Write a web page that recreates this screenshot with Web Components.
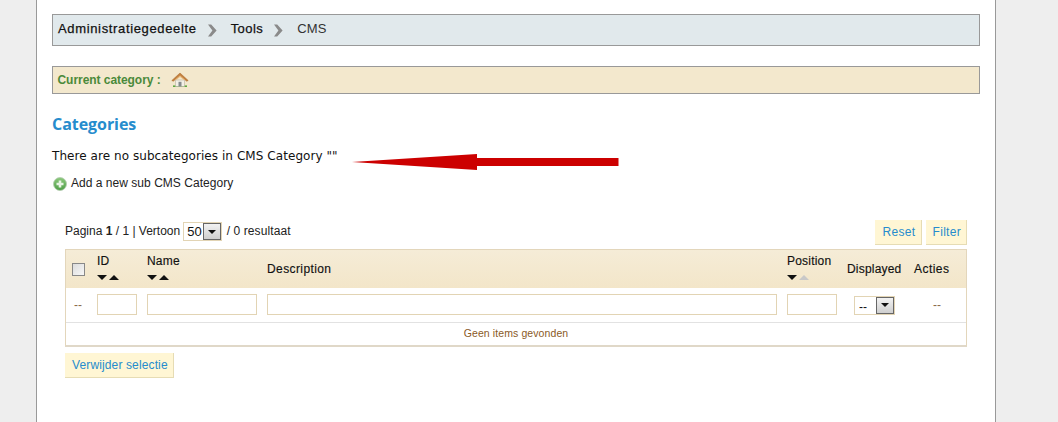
<!DOCTYPE html>
<html>
<head>
<meta charset="utf-8">
<title>CMS</title>
<style>
  html, body { margin: 0; padding: 0; height: 422px; overflow: hidden; background: #eee; }
</style>
</head>
<body>
<admin-page>
  <crumb-bar></crumb-bar>
  <category-bar></category-bar>
  <category-notice></category-notice>
  <list-toolbar></list-toolbar>
  <cms-table></cms-table>
  <yellow-button style="margin:6px 0 0 13px;letter-spacing:.13px">Verwijder selectie</yellow-button>
</admin-page>

<script>
// small helper, every element is just a shadow root + innerHTML
class BaseEl extends HTMLElement {
  constructor() {
    super();
    this.attachShadow({ mode: 'open' });
  }
  connectedCallback() {
    this.shadowRoot.innerHTML = this.render();
  }
}

class AdminPage extends BaseEl {
  render() {
    return `
      <style>
        :host {
          display: block;
          box-sizing: border-box;
          width: 960px;
          height: 422px;
          margin-left: 36px;
          background: #fff;
          border-left: 1px solid #999;
          border-right: 1px solid #999;
          padding: 14px 15px 0;
          font-family: "Liberation Sans", Arial, sans-serif;
          font-size: 12px;
          color: #222;
        }
      </style>
      <slot></slot>`;
  }
}

class CrumbBar extends BaseEl {
  render() {
    const arrow = `<svg width="9" height="13" viewBox="0 0 9 13"><path d="M0 .5h3.200L8.600 6.500 3.200 12.500H0L4.400 6.500z" fill="#8a8a8a"/></svg>`;
    return `
      <style>
        :host {
          display: flex;
          align-items: center;
          box-sizing: border-box;
          width: 928px;
          height: 32px;
          padding: 0 5px 4px;
          background: #e1e9ec;
          border: 1px solid #999;
          font-size: 13px;
          letter-spacing: .15px;
          color: #111;
        }
        b { font-weight: normal; letter-spacing: .65px; -webkit-text-stroke: .25px #111; }
        b.short { letter-spacing: .45px; }
        svg { margin: 4px 14px 0 11px; }
        svg.last { margin-right: 14px; }
        span { color: #333; }
      </style>
      <b>Administratiegedeelte</b>${arrow}<b class="short">Tools</b>${arrow}<span>CMS</span>`;
  }
}

class CategoryBar extends BaseEl {
  render() {
    return `
      <style>
        :host {
          display: flex;
          align-items: center;
          box-sizing: border-box;
          width: 928px;
          height: 28px;
          margin-top: 20px;
          padding: 0 4.500px;
          background: #f3e8cd;
          border: 1px solid #999;
          color: #4a8a3a;
          font-weight: bold;
          font-size: 12px;
          letter-spacing: -.05px;
        }
        svg { margin-left: 10px; }
      </style>
      Current category :
      <svg width="18" height="16" viewBox="0 0 18 16">
        <path d="M2 15h14v-1.600H2z" fill="#5da83f"/>
        <path d="M4.500 14.500V8h9v6.500z" fill="#f2efe6" stroke="#b9b2a0" stroke-width=".6"/>
        <path d="M7.500 14.500V9.800h3v4.700z" fill="#868a8c"/>
        <path d="M.8 8.500 9 1l8.200 7.500-1.500.7L9 3.600 2.300 9.200z" fill="#c4803c" stroke="#a5652a" stroke-width=".5"/>
        <path d="M9 3.600l-5 4.200 1 .3L9 5l4 3.100 1-.3z" fill="#e9b878"/>
      </svg>`;
  }
}

class CategoryNotice extends BaseEl {
  render() {
    return `
      <style>
        :host { display: block; position: relative; }
        h3 {
          margin: 20px 0 0;
          height: 20px;
          font: bold 16px/20px "Open Sans", Verdana, sans-serif;
          letter-spacing: -.05px;
          color: #268ccd;
        }
        p {
          margin: 14px 0 0;
          height: 16px;
          line-height: 16px;
          font-family: "DejaVu Sans", Verdana, sans-serif;
          font-size: 12px;
          letter-spacing: .06px;
          color: #111;
        }
        .add {
          display: flex;
          align-items: center;
          margin-top: 11px;
          height: 16px;
          font-size: 12px;
          letter-spacing: .03px;
          color: #222;
        }
        .add svg { margin: 2px 4px 0 1px; }
        .arrow { position: absolute; left: 299px; top: 38px; }
      </style>
      <h3>Categories</h3>
      <p>There are no subcategories in CMS Category ""</p>
      <div class="add">
        <svg width="14" height="14" viewBox="0 0 14 14">
          <defs>
            <linearGradient id="g" x1="0" y1="0" x2="0" y2="1">
              <stop offset="0" stop-color="#8cc97c"/>
              <stop offset="1" stop-color="#4f9e48"/>
            </linearGradient>
          </defs>
          <circle cx="7" cy="7" r="6.500" fill="url(#g)" stroke="#b4ccb0" stroke-width=".8"/>
          <path d="M5.700 3.500h2.600v2.200h2.200v2.600H8.300v2.200H5.700V8.300H3.500V5.700h2.200z" fill="#e8f4e4"/>
        </svg>
        Add a new sub CMS Category
      </div>
      <svg class="arrow" width="270" height="20" viewBox="0 0 270 20">
        <path d="M1 10 126 2v4h141.500v8H126v4z" fill="#cc0000"/>
      </svg>`;
  }
}

class SelectBox extends BaseEl {
  render() {
    const w = this.getAttribute('width') || '40';
    const value = this.getAttribute('value') || '';
    const cls = this.hasAttribute('low') ? 'low' : '';
    return `
      <style>
        :host {
          display: inline-flex;
          align-items: center;
          justify-content: space-between;
          box-sizing: border-box;
          width: ${w}px;
          height: 19px;
          border: 1px solid #e2d4b4;
          background: #fff;
          color: #111;
          font-size: 13px;
          vertical-align: middle;
        }
        span { padding-left: 3px; }
        span.low { padding: 4px 0 0 4px; font-size: 12px; }
        i {
          display: flex;
          align-items: center;
          justify-content: center;
          box-sizing: border-box;
          width: 18px;
          height: 17px;
          border: 1px solid #666;
          background: linear-gradient(#f2f2f2, #cfcfcf);
        }
        i::after {
          content: "";
          border-style: solid;
          border-width: 4px 4px 0;
          border-color: #111 transparent transparent;
        }
      </style>
      <span class="${cls}">${value}</span><i></i>`;
  }
}

class ListToolbar extends BaseEl {
  render() {
    return `
      <style>
        :host {
          display: flex;
          align-items: center;
          width: 902px;
          height: 25px;
          margin: 29px 0 4px 13px;
          font-size: 12px;
          color: #222;
        }
        .pager { flex: 1; margin-top: -2px; }
        .tail { margin-left: 1px; letter-spacing: .1px; }
        select-box { margin: 0 0 0 3px; }
        yellow-button + yellow-button { margin-left: 4px; }
      </style>
      <div class="pager">Pagina <b>1</b> / 1 | Vertoon<select-box width="39" value="50"></select-box><span class="tail"> / 0 resultaat</span></div>
      <yellow-button style="letter-spacing:.35px">Reset</yellow-button><yellow-button>Filter</yellow-button>`;
  }
}

class YellowButton extends BaseEl {
  render() {
    return `
      <style>
        :host {
          display: inline-block;
          box-sizing: border-box;
          height: 25px;
          padding: 0 5px 0 7px;
          line-height: 25px;
          background: #fff6d4;
          border-right: 1px solid #e6dcb4;
          border-bottom: 1px solid #e6dcb4;
          color: #268ccd;
          font-size: 12px;
          letter-spacing: .3px;
        }
      </style>
      <slot></slot>`;
  }
}

class SortArrows extends BaseEl {
  render() {
    const upColor = this.hasAttribute('off') ? '#c8c8c8' : '#111';
    return `
      <style>
        :host { display: flex; gap: 2px; height: 6px; margin-top: 7px; }
        i { border-style: solid; border-color: transparent; width: 0; height: 0; }
        .down { border-width: 5px 5px 0; border-top-color: #111; }
        .up { border-width: 0 5px 5px; border-bottom-color: ${upColor}; }
      </style>
      <i class="down"></i><i class="up"></i>`;
  }
}

class CmsTable extends BaseEl {
  render() {
    const input = w => `<div class="inp" style="width:${w}px"></div>`;
    return `
      <style>
        :host {
          display: block;
          box-sizing: border-box;
          margin-left: 13px;
          width: 902px;
          height: 98px;
          border: 1px solid #e3d6bb;
          border-bottom: 2px solid #e0d8c8;
          color: #222;
          font-size: 12px;
        }
        .row {
          display: grid;
          grid-template-columns: 26px 50px 120px 520px 60px 67px 1fr;
          align-items: center;
        }
        .row > div { padding-left: 5px; }
        .head {
          height: 38px;
          background: linear-gradient(#f5ecd7, #f3e6c9);
          color: #111;
          letter-spacing: .2px;
          -webkit-text-stroke: .15px #111;
        }
        .filters { height: 34px; border-bottom: 1px solid #e2e2e2; }
        .empty { height: 23px; line-height: 20px; text-align: center; font-size: 10.500px; color: #8a5a1f; letter-spacing: .1px; }
        .dash { color: #8a6a4a; }
        .inp { box-sizing: border-box; height: 21px; margin-top: -1px; border: 1px solid #e2d4b4; background: #fff; }
        .check { box-sizing: border-box; width: 13px; height: 13px; margin-left: 1px; border: 1px solid #888; background: linear-gradient(135deg, #dcdcdc, #f7f7f7); }
        .tall { padding-top: 1px; margin-top: -5px; }
      </style>
      <div class="row head">
        <div><div class="check"></div></div>
        <div class="tall">ID<sort-arrows></sort-arrows></div>
        <div class="tall">Name<sort-arrows></sort-arrows></div>
        <div style="letter-spacing:.4px">Description</div>
        <div class="tall">Position<sort-arrows off></sort-arrows></div>
        <div>Displayed</div>
        <div style="letter-spacing:.45px">Acties</div>
      </div>
      <div class="row filters">
        <div class="dash" style="padding-left:8px">--</div>
        <div>${input(40)}</div>
        <div>${input(110)}</div>
        <div>${input(510)}</div>
        <div>${input(50)}</div>
        <div style="padding-left:12px"><select-box width="41" value="--" low></select-box></div>
        <div class="dash" style="padding-left:24px">--</div>
      </div>
      <div class="empty">Geen items gevonden</div>`;
  }
}

customElements.define('admin-page', AdminPage);
customElements.define('crumb-bar', CrumbBar);
customElements.define('category-bar', CategoryBar);
customElements.define('category-notice', CategoryNotice);
customElements.define('select-box', SelectBox);
customElements.define('list-toolbar', ListToolbar);
customElements.define('yellow-button', YellowButton);
customElements.define('sort-arrows', SortArrows);
customElements.define('cms-table', CmsTable);
</script>
</body>
</html>
